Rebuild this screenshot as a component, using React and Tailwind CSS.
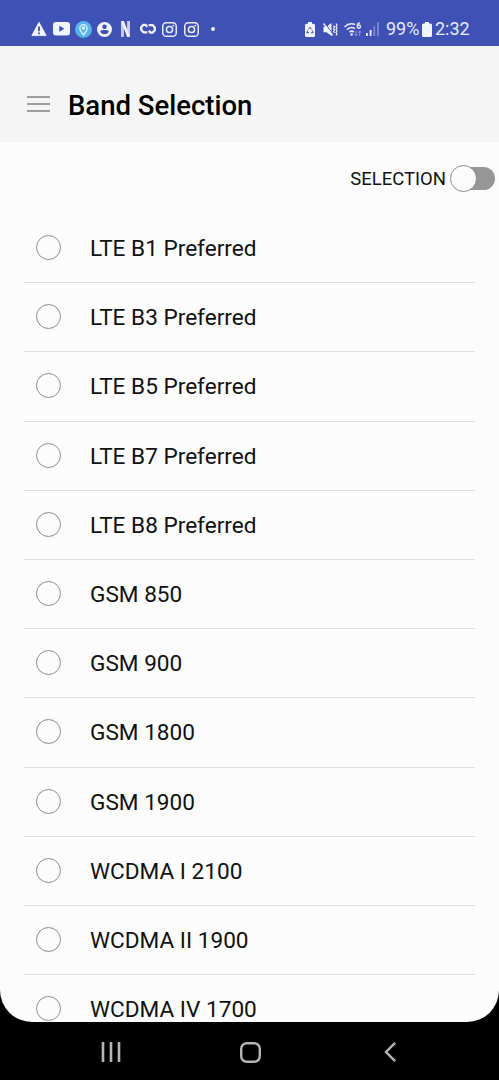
const bands = [
  'LTE B1 Preferred',
  'LTE B3 Preferred',
  'LTE B5 Preferred',
  'LTE B7 Preferred',
  'LTE B8 Preferred',
  'GSM 850',
  'GSM 900',
  'GSM 1800',
  'GSM 1900',
  'WCDMA I 2100',
  'WCDMA II 1900',
  'WCDMA IV 1700',
]

function WarningIcon() {
  return (
    <svg className="w-4 h-4" viewBox="0 0 16 16">
      <path d="M8 1.2 15.2 14.6H.8Z" fill="#f1f3fd" stroke="#f1f3fd" strokeWidth=".8" strokeLinejoin="round" />
      <path d="M8 5.6v4.6M8 11.4v1.8" stroke="#3f51b5" strokeWidth="1.8" />
    </svg>
  )
}

function VideoIcon() {
  return (
    <svg className="w-[17px] h-3.5" viewBox="0 0 17 14">
      <rect width="17" height="13.5" rx="3" fill="#f1f3fd" />
      <path d="M6.3 3.8v6l5-3Z" fill="#3f51b5" />
    </svg>
  )
}

function LocationIcon() {
  return (
    <svg className="w-[17px] h-[17px]" viewBox="0 0 17 17">
      <circle cx="8.5" cy="8.5" r="8.5" fill="#56b4ea" />
      <path d="M8.5 14c-1.2-1.9-3.7-4-3.7-6.7a3.7 3.7 0 0 1 7.4 0c0 2.7-2.5 4.8-3.7 6.7Z" fill="none" stroke="#e3f5ff" strokeWidth="1.2" />
      <circle cx="8.5" cy="7" r="1.7" fill="#e3f5ff" />
    </svg>
  )
}

function AccountIcon() {
  return (
    <svg className="w-[15px] h-[15px]" viewBox="0 0 15 15">
      <circle cx="7.5" cy="7.5" r="7.5" fill="#f1f3fd" />
      <circle cx="7.5" cy="4.7" r="2.2" fill="#3f51b5" />
      <path d="M3 9.2c1.2-1.7 7.8-1.7 9 0-.9 1.9-2.5 3-4.5 3s-3.6-1.1-4.5-3Z" fill="#3f51b5" />
    </svg>
  )
}

function NetflixIcon() {
  return (
    <svg className="w-[9px] h-4" viewBox="0 0 9 16">
      <path d="M0 0h2.9v16L0 15.7ZM6.1 0H9v15.7l-2.9.3Z" fill="#c5cdf3" />
      <path d="M0 0h2.9L9 15.7 6.1 16Z" fill="#f1f3fd" />
    </svg>
  )
}

function LoopIcon() {
  return (
    <svg className="w-4 h-3" viewBox="0 0 16 12" fill="none" stroke="#f1f3fd" strokeWidth="2.3" strokeLinejoin="round">
      <path d="M7.3 3.7 5.5 1.8H3.4L1.2 4.2v2.6l2.2 2.5H7.3" />
      <path d="M8.7 2.1h3.9l2.2 2.5v2.6l-2.2 2.4h-2.1L8.7 7.7" />
    </svg>
  )
}

function InstagramIcon() {
  return (
    <svg className="w-[15px] h-[15px]" viewBox="0 0 15 15" fill="none" stroke="#e8ebfb" strokeWidth="1.5">
      <rect x=".75" y=".75" width="13.5" height="13.5" rx="3.6" />
      <circle cx="7.5" cy="7.5" r="3.1" />
      <circle cx="11.3" cy="3.7" r=".9" fill="#e8ebfb" stroke="none" />
    </svg>
  )
}

function RecycleBatteryIcon() {
  return (
    <svg className="w-2.5 h-[15px]" viewBox="0 0 10 15">
      <path d="M3 0h4v1.7h1.5A1.5 1.5 0 0 1 10 3.2v10.3a1.5 1.5 0 0 1-1.5 1.5h-7A1.5 1.5 0 0 1 0 13.5V3.2a1.5 1.5 0 0 1 1.5-1.5H3Z" fill="#f1f3fd" />
      <path d="M3.5 7.4 5 5.3l1.5 2.1M7.2 8.5l1 2.2H6M4 10.7H1.8l1-2.2" fill="none" stroke="#3f51b5" strokeWidth="1" />
    </svg>
  )
}

function VibrateMuteIcon() {
  return (
    <svg className="w-[15px] h-[15px]" viewBox="0 0 15 15" fill="none" stroke="#f1f3fd">
      <path d="M.5 4.8h3L8.5 1v13L3.5 10.2h-3Z" fill="#f1f3fd" stroke="none" />
      <path d="M1.5.8 10 12" stroke="#3f51b5" strokeWidth="1" />
      <path d="M.5 1.5 9.5 13.5" strokeWidth="1.4" />
      <path d="m10.5 3.5 1 1.5-1 1.5 1 1.5-1 1.5 1 1.5M13 1.5 14 3l-1 1.500L14 6l-1 1.500L14 9l-1 1.500 1 1.500-1 1.500" strokeWidth="1.2" />
    </svg>
  )
}

function WifiIcon() {
  return (
    <svg className="w-[18px] h-[15px]" viewBox="0 0 18 15" fill="none" stroke="#e8ebfb" strokeWidth="1.6">
      <path d="M.6 5C3.6 1.9 7.6 1.2 11 2.6M3 7.7c2.3-2.3 5.4-2.7 8-1M5.5 10.2c1.3-1.2 3.1-1.2 4.4 0" />
      <circle cx="7.6" cy="12.5" r="1.3" fill="#e8ebfb" stroke="none" />
      <path d="M15.8.7c-1.7.2-2.5 1.6-2.5 3.3" strokeWidth="1.4" />
      <circle cx="14.9" cy="4.6" r="1.6" strokeWidth="1.4" />
      <path d="M12 9v4.7m-1.7-1.5L12 13.8l1.6-1.6M15.7 14V9.2m-1.6 1.5 1.6-1.6 1.7 1.6" stroke="#8a97dc" strokeWidth="1" />
    </svg>
  )
}

function SignalIcon() {
  return (
    <svg className="w-[13px] h-3.5" viewBox="0 0 13 14">
      <path d="M0 11h1.8v3H0ZM3.7 8h1.8v6H3.7Z" fill="#f1f3fd" />
      <path d="M7.4 4.2h1.8V14H7.4ZM11.1 0h1.8v14h-1.8Z" fill="#7c89d2" />
    </svg>
  )
}

function BatteryIcon() {
  return (
    <svg className="w-2.5 h-[15px]" viewBox="0 0 10 15">
      <path d="M3 0h4v1.5h1.5A1.5 1.5 0 0 1 10 3v10.5A1.5 1.5 0 0 1 8.5 15h-7A1.5 1.5 0 0 1 0 13.5V3a1.5 1.5 0 0 1 1.5-1.5H3Z" fill="#f1f3fd" />
    </svg>
  )
}

function StatusBar() {
  return (
    <div className="h-[46px] shrink-0 bg-[#3f51b5] pt-3.5 pl-[31px] pr-[29px] flex justify-between text-[#e8ebfb]">
      <div className="h-8 -mt-px flex items-center">
        <WarningIcon />
        <span className="ml-1.5"><VideoIcon /></span>
        <span className="ml-[5px]"><LocationIcon /></span>
        <span className="ml-[5px]"><AccountIcon /></span>
        <span className="ml-[9px]"><NetflixIcon /></span>
        <span className="ml-[10px]"><LoopIcon /></span>
        <span className="ml-1.5"><InstagramIcon /></span>
        <span className="ml-[7px]"><InstagramIcon /></span>
        <span className="ml-3 size-1 rounded-full bg-[#f1f3fd]" />
      </div>
      <div className="h-8 -mt-px flex items-center">
        <RecycleBatteryIcon />
        <span className="ml-2"><VibrateMuteIcon /></span>
        <span className="ml-1.5"><WifiIcon /></span>
        <span className="ml-1"><SignalIcon /></span>
        <span className="ml-[7px] w-9 text-[18px] leading-none whitespace-nowrap">99%</span>
        <BatteryIcon />
        <span className="ml-[3px] w-[35px] text-[18px] leading-none whitespace-nowrap">2:32</span>
      </div>
    </div>
  )
}

function Header() {
  return (
    <header className="h-24 shrink-0 bg-[#f5f5f5] flex items-center pt-[22px] pl-[27px]">
      <button className="flex flex-col gap-[5px] mt-[-2px]" aria-label="Menu">
        <span className="w-[23px] h-0.5 bg-[#9e9e9e]" />
        <span className="w-[23px] h-0.5 bg-[#9e9e9e]" />
        <span className="w-[23px] h-0.5 bg-[#9e9e9e]" />
      </button>
      <h1 className="ml-[18px] pt-0.5 text-[27.5px] leading-8 font-medium text-black">Band Selection</h1>
    </header>
  )
}

function SelectionToggle() {
  return (
    <div className="h-[72px] shrink-0 flex items-center justify-end pr-[3px]">
      <span className="pt-px text-[18.5px] leading-6 text-[#111]">SELECTION</span>
      <button className="ml-1 w-[46px] h-7 flex items-center" role="switch" aria-checked="false" aria-label="Selection">
        <span className="size-[27px] shrink-0 rounded-full border border-[#8c8c8c] bg-[#fcfcfc] z-10" />
        <span className="-ml-[14px] w-8 h-[23px] rounded-r-full bg-[#969696]" />
      </button>
    </div>
  )
}

function BandRow({ label }) {
  return (
    <li className="h-[69.2px] shrink-0 flex items-center border-b border-[#dedede] pl-3">
      <span className="size-[25px] -mt-px rounded-full border border-[#8f8f8f]" />
      <span className="ml-[29px] pt-0.5 text-[22.6px] leading-7 text-[#111]">{label}</span>
    </li>
  )
}

function NavBar() {
  return (
    <nav className="h-[58px] shrink-0 bg-black text-[#b5b5b5] flex items-center pl-[101px] pt-0.5">
      <svg className="w-5 h-5" viewBox="0 0 20 20" stroke="currentColor" strokeWidth="2.6">
        <path d="M2 0v20M10 0v20M18 0v20" />
      </svg>
      <svg className="ml-[119px] w-[21px] h-[21px]" viewBox="0 0 21 21" fill="none" stroke="currentColor" strokeWidth="2.4">
        <rect x="1.2" y="1.2" width="18.6" height="18.6" rx="5.5" />
      </svg>
      <svg className="ml-[123px] w-3 h-5" viewBox="0 0 12 20" fill="none" stroke="currentColor" strokeWidth="2.4">
        <path d="M11.2.9 2 10l9.2 9.1" />
      </svg>
    </nav>
  )
}

export default function App() {
  return (
    <div className="w-[499px] h-[1080px] bg-black flex flex-col overflow-hidden font-['Roboto',sans-serif]">
      <StatusBar />
      <div className="h-[976px] shrink-0 flex flex-col overflow-hidden rounded-b-[32px] bg-[#fcfcfc]">
        <Header />
        <SelectionToggle />
        <ul className="flex flex-col mx-6">
          {bands.map((band) => (
            <BandRow key={band} label={band} />
          ))}
        </ul>
      </div>
      <NavBar />
    </div>
  )
}
